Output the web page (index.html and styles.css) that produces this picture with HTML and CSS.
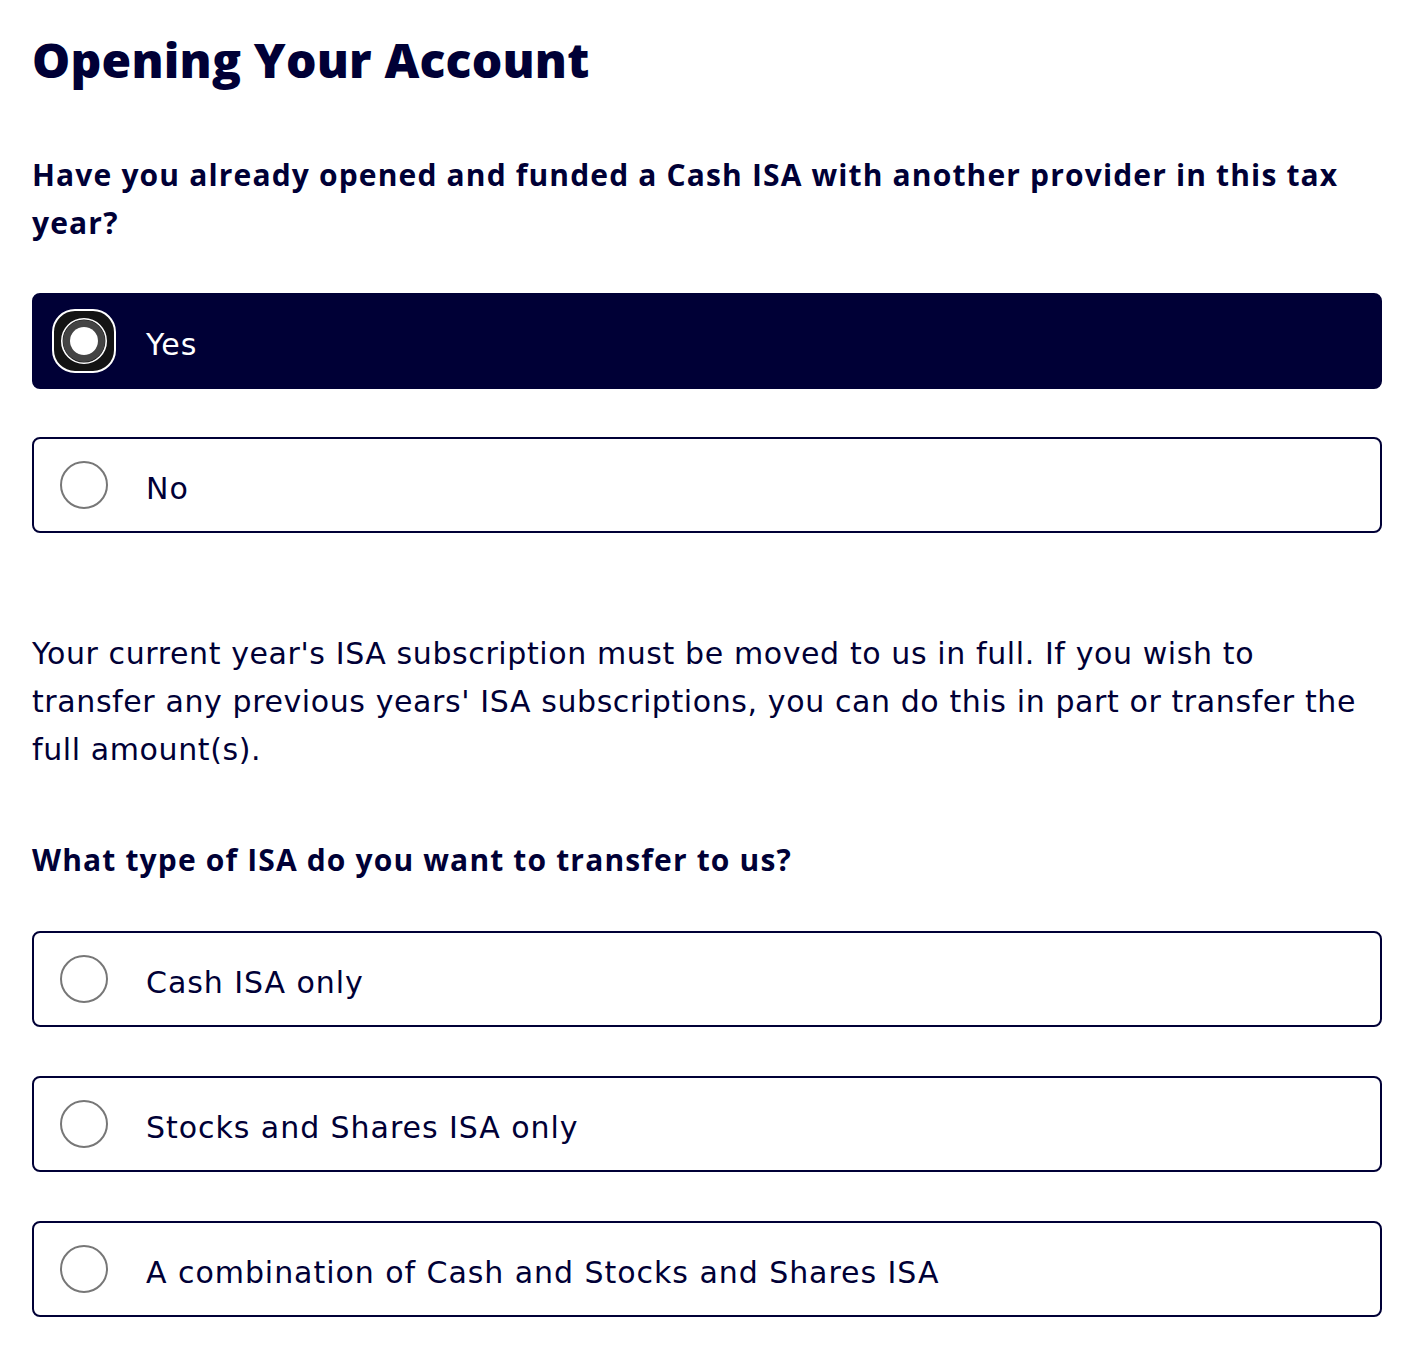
FILE: index.html
```html
<!DOCTYPE html>
<html lang="en">
<head>
<meta charset="utf-8">
<title>Opening Your Account</title>
<link rel="stylesheet" href="styles.css">
</head>
<body>
<main class="page">
  <h1 class="title">Opening Your Account</h1>

  <fieldset class="group group-first">
    <legend class="question">Have you already opened and funded a Cash ISA with another provider in this tax year?</legend>
    <div class="options">
      <label class="option option-selected">
        <span class="radio-focus">
          <svg width="64" height="64" viewBox="0 0 64 64" aria-hidden="true">
            <rect x="1" y="1" width="62" height="62" rx="22" ry="22" fill="#141414" stroke="#ffffff" stroke-width="2"/>
            <circle cx="32" cy="32" r="22.2" fill="none" stroke="#ffffff" stroke-width="1.6"/>
            <circle cx="32" cy="32" r="17.5" fill="none" stroke="#444444" stroke-width="7"/>
            <circle cx="32" cy="32" r="14" fill="#ffffff"/>
          </svg>
        </span>
        <span class="label">Yes</span>
      </label>
      <label class="option">
        <span class="radio"></span>
        <span class="label">No</span>
      </label>
    </div>
  </fieldset>

  <p class="info">Your current year's ISA subscription must be moved to us in full. If you wish to transfer any previous years' ISA subscriptions, you can do this in part or transfer the full amount(s).</p>

  <fieldset class="group">
    <legend class="question">What type of ISA do you want to transfer to us?</legend>
    <div class="options options-wide">
      <label class="option">
        <span class="radio"></span>
        <span class="label">Cash ISA only</span>
      </label>
      <label class="option">
        <span class="radio"></span>
        <span class="label">Stocks and Shares ISA only</span>
      </label>
      <label class="option">
        <span class="radio"></span>
        <span class="label">A combination of Cash and Stocks and Shares ISA</span>
      </label>
    </div>
  </fieldset>
</main>
</body>
</html>
```

FILE: styles.css
```css
* { box-sizing: border-box; }

html, body {
  margin: 0;
  padding: 0;
  background: #ffffff;
}

body {
  font-family: "Open Sans", "DejaVu Sans", sans-serif;
  color: #000036;
}

.page {
  width: 1414px;
  padding: 28px 32px 40px 32px;
}

.title {
  margin: 0;
  font-size: 48px;
  line-height: 64px;
  font-weight: 800;
  letter-spacing: 0.2px;
}

.group {
  border: 0;
  margin: 0;
  padding: 0;
  min-width: 0;
}

.group-first {
  margin-top: 59px;
}

.question {
  padding: 0;
  font-size: 30px;
  line-height: 48px;
  font-weight: 700;
  letter-spacing: 1.15px;
}

.options {
  display: flex;
  flex-direction: column;
  gap: 48px;
  margin-top: 46px;
}

.options-wide {
  gap: 49px;
  margin-top: 47px;
}

.option {
  display: flex;
  align-items: center;
  height: 96px;
  border: 2px solid #000036;
  border-radius: 8px;
  padding-left: 26px;
  background: #ffffff;
}

.option-selected {
  background: #000036;
  color: #ffffff;
  padding-left: 18px;
}

.radio {
  width: 48px;
  height: 48px;
  border: 2px solid #777777;
  border-radius: 50%;
  flex: 0 0 auto;
  margin-right: 38px;
}

.radio-focus {
  display: block;
  width: 64px;
  height: 64px;
  flex: 0 0 auto;
  margin-right: 30px;
}

.radio-focus svg { display: block; }

.label {
  font-family: "DejaVu Sans", "Open Sans", sans-serif;
  font-size: 30px;
  line-height: 48px;
  letter-spacing: 0.95px;
  padding-top: 8px;
}

.info {
  margin: 97px 0 0 0;
  font-family: "DejaVu Sans", "Open Sans", sans-serif;
  font-size: 30px;
  line-height: 48px;
  font-weight: 400;
  letter-spacing: 0.6px;
}

.info + .group {
  margin-top: 62px;
}
```
